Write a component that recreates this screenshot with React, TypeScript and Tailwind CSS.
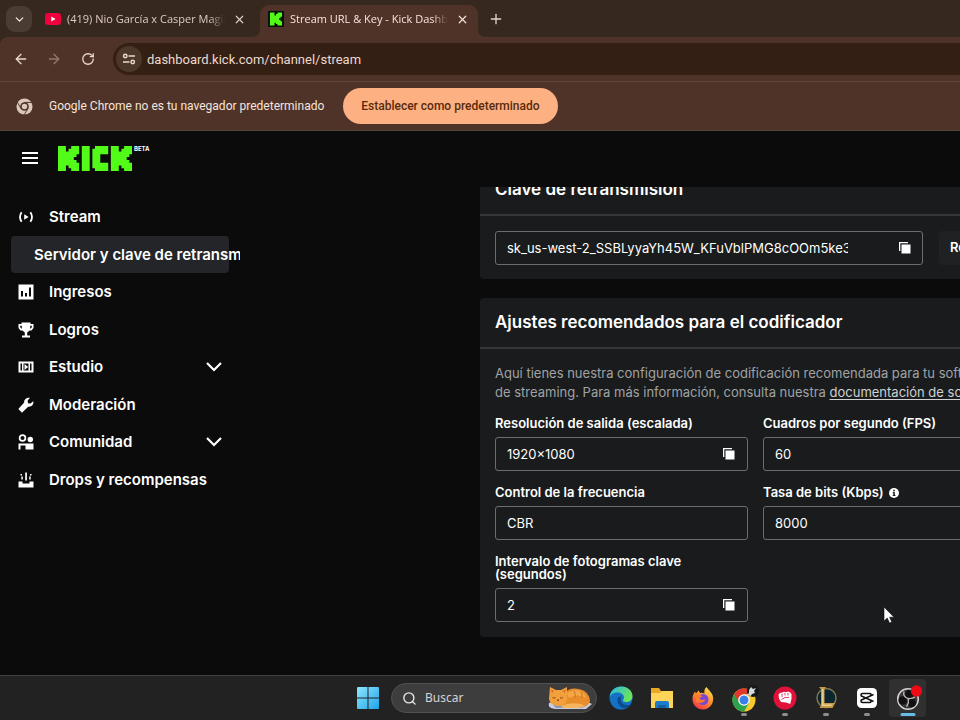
import type { ReactNode } from "react";
import { ArrowLeft, ArrowRight, ChevronDown, Plus, RotateCw, Search, X } from "lucide-react";

const K_PATH = "M0 0h3v2h1V1h1V0h3v3H7v1H6v1h1v1h1v3H5V8H4V7H3v2H0Z";

function YouTubeIcon() {
  return (
    <svg width="16" height="12" viewBox="0 0 16 12" aria-hidden="true">
      <rect width="16" height="12" rx="3" fill="#f0003c" />
      <path d="M6.3 3.5v5l4.3-2.5Z" fill="#fff" />
    </svg>
  );
}

function KickFavicon() {
  return (
    <svg width="16" height="16" viewBox="0 0 16 16" aria-hidden="true">
      <rect width="16" height="16" fill="#07120a" />
      <path d={K_PATH} transform="translate(2 1.5) scale(1.5 1.45)" fill="#53fc18" />
    </svg>
  );
}

function ChromeMark() {
  return (
    <svg width="17" height="17" viewBox="0 0 18 18" className="shrink-0" aria-hidden="true">
      <circle cx="9" cy="9" r="8.5" fill="#dcc6ba" />
      <circle cx="9" cy="9" r="4.600" fill="#4f3329" />
      <circle cx="9" cy="9" r="2.900" fill="#dcc6ba" />
      <path d="M9 4.700h8.500M5.300 11.200 1 3.800M12.700 11.200 8.500 18" fill="none" stroke="#4f3329" strokeWidth="1" />
    </svg>
  );
}

function KickLogo() {
  return (
    <svg width="74" height="25" viewBox="0 0 28 9" preserveAspectRatio="none" fill="#53fc18" role="img" aria-label="Kick">
      <path d={K_PATH} />
      <rect x="9" y="0" width="3" height="9" />
      <path d="M14 0h5v3h-3v3h3v3h-5V8h-1V1h1Z" />
      <path d={K_PATH} transform="translate(20 0)" />
    </svg>
  );
}

function CopyIcon() {
  return (
    <svg width="14" height="14" viewBox="0 0 14 14" fill="#fff" aria-hidden="true">
      <path d="M1 1h9v1.3H2.3V10H1Z" />
      <rect x="3.5" y="3.5" width="9" height="9" />
    </svg>
  );
}

function InfoIcon() {
  return (
    <svg width="10" height="10" viewBox="0 0 10 10" aria-hidden="true">
      <circle cx="5" cy="5" r="5" fill="#fff" />
      <path d="M4.2 1.8h1.6v1.5H4.2ZM3.8 4h2v3h.6v1H3.7V7h.6V5h-.5Z" fill="#191b1c" />
    </svg>
  );
}

const navIcons: Record<string, ReactNode> = {
  stream: (
    <>
      <path d="M6.2 5.2v5.6L10.6 8Z" />
      <path d="M3.6 3.2Q.4 8 3.6 12.8M12.4 3.2Q15.6 8 12.4 12.8" fill="none" stroke="#fff" strokeWidth="1.8" />
    </>
  ),
  revenue: <path fillRule="evenodd" d="M.5.5h15v15H.5ZM3 7v5.500h2V7ZM7 9v3.500h2V9ZM11 3.500v9h2v-9Z" />,
  trophy: (
    <path
      fillRule="evenodd"
      d="M3.500.5h9V2h3v4L13.500 8.500h-1.800L9.200 10.500v3H12v2H4v-2h2.800v-3L4.300 8.500H2.500L.5 6V2h3ZM2.200 3.700v1.600l1 1.200h.6V3.700ZM12.200 3.700v2.800h.6l1-1.200V3.700Z"
    />
  ),
  studio: <path fillRule="evenodd" d="M.5 2.500h15v11H.5ZM2.500 4.500v7h1.500v-7ZM5.500 4.500v7h5v-7ZM12 4.500v7h1.500v-7ZM6.500 5 10.200 8l-3.700 3Z" />,
  wrench: <path d="M15.200 4.200 12.500 6.500 10 6.200 9.700 3.600 12 .8C8.800 0 5.700 2.500 6.200 5.600L.3 12l3.700 3.700 6.200-6c3.500.7 6-2.400 5-5.500Z" />,
  community: (
    <>
      <circle cx="4.500" cy="4" r="2.900" fill="none" stroke="#fff" strokeWidth="1.700" />
      <circle cx="12.300" cy="5.500" r="2.700" />
      <path d="M.5 15.500V9.500H15.500v6H7.500v-4h-5v4Z" />
    </>
  ),
  drops: (
    <>
      <path d="M.5 9.500h4v2h7v-2h4v6H.5Z" />
      <path d="M7.200.5h1.700v8H7.200ZM2.500 2h1.500v1.500H2.500ZM3.300 4.500h1.500v3H3.300ZM12 2h1.500v1.500H12ZM11.200 4.500h1.500v3h-1.500Z" />
    </>
  ),
};

const navItems = [
  { label: "Stream", icon: "stream" },
  { label: "Servidor y clave de retransmisión", active: true },
  { label: "Ingresos", icon: "revenue" },
  { label: "Logros", icon: "trophy" },
  { label: "Estudio", icon: "studio", expandable: true },
  { label: "Moderación", icon: "wrench" },
  { label: "Comunidad", icon: "community", expandable: true },
  { label: "Drops y recompensas", icon: "drops" },
];

function Tab({ title, icon, active }: { title: string; icon: ReactNode; active?: boolean }) {
  return (
    <div
      className={
        "relative flex h-8 w-[218px] items-center rounded-t-[9px] pb-1 pl-2 " +
        (active ? "bg-[#4f3329] text-[#f6e4db]" : "text-[#dccbc1]")
      }
    >
      {active && (
        <>
          <svg className="absolute bottom-0 -left-2" width="8" height="8" viewBox="0 0 8 8" aria-hidden="true">
            <path d="M8 0v8H0Q8 8 8 0Z" fill="#4f3329" />
          </svg>
          <svg className="absolute -right-2 bottom-0" width="8" height="8" viewBox="0 0 8 8" aria-hidden="true">
            <path d="M0 0v8h8Q0 8 0 0Z" fill="#4f3329" />
          </svg>
        </>
      )}
      {icon}
      <span className="ml-1.5 w-[158px] overflow-hidden font-['Open_Sans',sans-serif] text-[11px] whitespace-nowrap [mask-image:linear-gradient(to_right,#000_90%,transparent)]">
        {title}
      </span>
      <button aria-label="Cerrar pestaña" className="ml-2">
        <X size={13} strokeWidth={2.2} />
      </button>
    </div>
  );
}

function Browser() {
  return (
    <header className="shrink-0 bg-[#37281f] font-[Roboto,'Noto_Sans',sans-serif]">
      <div className="flex h-[37px] items-end">
        <button aria-label="Buscar pestañas" className="mb-[5px] ml-1.5 flex size-[26px] items-center justify-center rounded-[9px] bg-[#4a3b33] text-[#f3e2d8]">
          <ChevronDown size={13} strokeWidth={2.5} />
        </button>
        <div className="ml-[5px] flex gap-[5px]">
          <Tab title="(419) Nio García x Casper Magico" icon={<YouTubeIcon />} />
          <Tab title="Stream URL & Key - Kick Dashboard" icon={<KickFavicon />} active />
        </div>
        <button aria-label="Nueva pestaña" className="mb-2.5 ml-2.5 text-[#e4d3c9]">
          <Plus size={16} />
        </button>
      </div>
      <div className="flex h-11 items-center rounded-tl-lg bg-[#4f3329] pl-[13px] text-[#ecd9ce]">
        <button aria-label="Atrás">
          <ArrowLeft size={16} />
        </button>
        <button aria-label="Adelante" className="ml-[17px] text-[#93776b]">
          <ArrowRight size={16} />
        </button>
        <button aria-label="Volver a cargar" className="ml-[19px]">
          <RotateCw size={14} strokeWidth={2.200} />
        </button>
        <div className="ml-[18px] flex h-8 grow items-center rounded-l-full bg-[#331f13] pl-[3px]">
          <button aria-label="Información del sitio" className="flex size-[26px] shrink-0 items-center justify-center rounded-full bg-[#4d372b]">
            <svg width="14" height="14" viewBox="0 0 14 14" fill="none" stroke="#ecd9ce" strokeWidth="1.500" aria-hidden="true">
              <circle cx="3.300" cy="4" r="1.700" />
              <path d="M6.500 4H13M1 10h6.500" />
              <circle cx="10.700" cy="10" r="1.700" />
            </svg>
          </button>
          <input aria-label="Dirección" readOnly defaultValue="dashboard.kick.com/channel/stream" className="ml-[5px] h-8 grow bg-transparent text-[13px] text-[#ecd9ce] outline-none" />
        </div>
      </div>
      <div className="flex h-[50px] items-center border-y border-t-[#62463b] border-b-[#57443b] bg-[#4f3329] pl-4 text-[12px] text-[#f6e4db]">
        <ChromeMark />
        <span className="ml-4 whitespace-nowrap">Google Chrome no es tu navegador predeterminado</span>
        <button className="ml-[19px] h-9 rounded-full bg-[#fdb183] px-[18px] font-medium whitespace-nowrap text-[#592b0b]">Establecer como predeterminado</button>
      </div>
    </header>
  );
}

function Sidebar() {
  return (
    <nav className="w-60 shrink-0 overflow-hidden pt-[11px] pl-[11px]">
      <ul className="grid h-[300px] grid-rows-8">
        {navItems.map((item) => (
          <li key={item.label} className="w-[218px]">
            <a
              href="#"
              className={
                "flex h-full items-center pt-px text-[15px] font-semibold whitespace-nowrap " +
                (item.active ? "rounded bg-[#232528] pl-[23px]" : "pl-[7px]")
              }
            >
              {item.icon && (
                <svg width="16" height="16" viewBox="0 0 16 16" fill="#fff" className="mr-[15px] shrink-0" aria-hidden="true">
                  {navIcons[item.icon]}
                </svg>
              )}
              {item.label}
              {item.expandable && (
                <svg width="16" height="10" viewBox="0 0 16 10" className="mr-[7px] ml-auto" fill="none" stroke="#fff" strokeWidth="2.200" aria-hidden="true">
                  <path d="m1 1 7 7 7-7" />
                </svg>
              )}
            </a>
          </li>
        ))}
      </ul>
    </nav>
  );
}

function Panel({ title, children }: { title: string; children: ReactNode }) {
  return (
    <section className="min-w-[551px] rounded bg-[#191b1c]">
      <h2 className="flex h-[51px] items-center border-b-2 border-[#343637] px-[15px] pt-px text-[17px] font-semibold">{title}</h2>
      {children}
    </section>
  );
}

type FieldProps = { id: string; label: string; value: string; copy?: boolean; info?: boolean };

function Field({ id, label, value, copy, info }: FieldProps) {
  return (
    <div className="flex flex-col gap-[7px]">
      <label htmlFor={id} className="flex items-center gap-[5px] text-[13px] leading-[13px] font-semibold">
        {label}
        {info && <InfoIcon />}
      </label>
      <div className="flex h-[34px] items-center rounded-[3px] border border-[#6b6d6e] px-[11px]">
        <input id={id} readOnly defaultValue={value} className="w-0 grow bg-transparent pt-0.5 text-[13px] outline-none" />
        {copy && (
          <button aria-label={"Copiar " + label}>
            <CopyIcon />
          </button>
        )}
      </div>
    </div>
  );
}

function Dashboard() {
  return (
    <div className="flex min-h-0 grow flex-col overflow-hidden bg-[#0b0b0b] font-[Inter,sans-serif] text-white">
      <div className="flex h-14 shrink-0 items-center pb-0.5 pl-[22px]">
        <button aria-label="Menú" className="flex w-4 flex-col gap-[3px]">
          <span className="h-0.5 bg-white" />
          <span className="h-0.5 bg-white" />
          <span className="h-0.5 bg-white" />
        </button>
        <a href="#" className="ml-5 flex items-start">
          <KickLogo />
          <span className="ml-0.5 text-[6px] leading-[6px] font-bold">BETA</span>
        </a>
      </div>
      <div className="flex min-h-0 grow">
        <Sidebar />
        <main className="min-w-0 grow overflow-hidden pl-60">
          <div className="-mt-[22px] flex flex-col gap-[19px]">
            <Panel title="Clave de retransmisión">
              <div className="flex gap-4 px-[15px] pt-[15px] pb-3.5">
                <div className="flex h-[34px] grow items-center justify-between rounded-[3px] border border-[#6b6d6e] pr-2.5 pl-[11px]">
                  <input aria-label="Clave de retransmisión" readOnly defaultValue="sk_us-west-2_SSBLyyaYh45W_KFuVblPMG8cOOm5ke3x" className="w-[341px] bg-transparent pt-0.5 text-[13px] outline-none" />
                  <button aria-label="Copiar clave">
                    <CopyIcon />
                  </button>
                </div>
                <button className="w-[77px] shrink-0 rounded-[3px] bg-[#1f2122] pl-[11px] text-left text-[13px] font-semibold">Renovar</button>
              </div>
            </Panel>
            <Panel title="Ajustes recomendados para el codificador">
              <div className="p-[15px]">
                <p className="pr-4 text-[13px] leading-[19px] text-[#a0a3a5]">
                  Aquí tienes nuestra configuración de codificación recomendada para tu software de streaming. Para más información, consulta nuestra{" "}
                  <a href="#" className="text-[#cfd1d2] underline underline-offset-2">documentación de soporte</a>
                </p>
                <div className="mt-[15px] grid grid-cols-2 gap-[15px]">
                  <Field id="resolution" label="Resolución de salida (escalada)" value="1920×1080" copy />
                  <Field id="fps" label="Cuadros por segundo (FPS)" value="60" copy />
                  <Field id="rate" label="Control de la frecuencia" value="CBR" />
                  <Field id="bitrate" label="Tasa de bits (Kbps)" value="8000" copy info />
                  <Field id="keyframe" label="Intervalo de fotogramas clave (segundos)" value="2" copy />
                </div>
              </div>
            </Panel>
          </div>
        </main>
      </div>
    </div>
  );
}

function WindowsIcon() {
  return (
    <svg width="22" height="22" viewBox="0 0 22 22" aria-hidden="true">
      <defs>
        <linearGradient id="win" x1="0" y1="0" x2="1" y2="1">
          <stop offset="0" stopColor="#8fe6fd" />
          <stop offset="1" stopColor="#1fa4ea" />
        </linearGradient>
      </defs>
      <path d="M0 1q0-1 1-1h9.500v10.500H0ZM11.500 0H21q1 0 1 1v9.500H11.500ZM0 11.500h10.500V22H1q-1 0-1-1ZM11.500 11.500H22V21q0 1-1 1h-9.500Z" fill="url(#win)" />
    </svg>
  );
}

function CatPicture() {
  return (
    <svg width="46" height="25" viewBox="0 0 46 25" aria-hidden="true">
      <path d="M2 17 9 15h30l6 3-6 5H8Q0 22 2 17Z" fill="#c9cde0" />
      <path d="M6 19h34l-5 3H9Z" fill="#8f96b8" />
      <path d="M17 8Q22 1 32 3q10 2 11 12-1 5-7 6H14Z" fill="#e88d2c" />
      <path d="M20 7q6-4 13-2 5 2 6 7-8-5-17 0Z" fill="#f4a747" />
      <path d="M3 1 9 4h5l6-3v12q-1 7-9 7-8-1-9-7Z" fill="#f2a03c" />
      <path d="M27 5q2 4 1 7M34 6q2 3 1 6" fill="none" stroke="#d47c22" strokeWidth="1.200" />
      <path d="M14 20q8-4 20-2l4 2-6 2H16Z" fill="#f6b35a" />
      <path d="M5.500 11.500q1.500 1.500 3 0M13 11.500q1.500 1.500 3 0M10 14h2l-1 1Z" fill="none" stroke="#8a4512" />
      <path d="m4 3 3 2-2 2ZM18.800 3l-3 2 2 2Z" fill="#d4742a" />
    </svg>
  );
}

function EdgeIcon() {
  return (
    <svg width="24" height="24" viewBox="0 0 24 24" aria-hidden="true">
      <defs>
        <linearGradient id="edgeTop" x1="0" y1="0" x2="1" y2=".4">
          <stop offset="0" stopColor="#2ab7e8" />
          <stop offset="1" stopColor="#6be35a" />
        </linearGradient>
      </defs>
      <circle cx="12" cy="12" r="11.500" fill="#1571c4" />
      <path d="M.6 11C1.500 4.500 6.500.5 12.300.5 19 .5 23.500 5 23.500 10c0 4-3 6-6.200 6-2.500 0-3.600-1-3.300-2 .8-1 1-1.700 1-2.500C15 8.500 12 6.500 8.500 6.500 5 6.500 1.600 8.500.6 11Z" fill="url(#edgeTop)" />
      <path d="M8.600 12.500c-1 4.500 2 9 7 9.500 2.700 0 5-1.500 6.500-3.800-5.500 2.500-10.500-.6-10.300-5 0-1 .4-1.700.8-2.200-1.800-.6-3.500 0-4 1.500Z" fill="#0c4a8c" />
    </svg>
  );
}

function FolderIcon() {
  return (
    <svg width="24" height="22" viewBox="0 0 24 22" aria-hidden="true">
      <path d="M1 1h8l2 3h12v17H1Z" fill="#e8a724" />
      <path d="M1 6h9l2-2h11v17H1Z" fill="#fcd45a" />
      <path d="M5 21v-5q0-2 2-2h10q2 0 2 2v5Z" fill="#1b7ccb" />
      <path d="M8 18h8v3H8Z" fill="#155f9f" />
    </svg>
  );
}

function FirefoxIcon() {
  return (
    <svg width="22" height="23" viewBox="0 0 22 23" aria-hidden="true">
      <defs>
        <linearGradient id="fox" x1=".8" y1="0" x2=".2" y2="1">
          <stop offset="0" stopColor="#ffe34a" />
          <stop offset=".5" stopColor="#ff8a2a" />
          <stop offset="1" stopColor="#f2304f" />
        </linearGradient>
      </defs>
      <path d="M14.500 0c1 2 3 3 4 5 3 3 3.500 8 1.500 12-2 3.500-5 5.500-9 5.500C5 22.500.5 18 .5 12c0-3 1-6 2.500-7.500L4 6.500 6.500 3.500 8 6c2-.5 3.500 0 4.500.5C12 4 12.500 1.500 14.500 0Z" fill="url(#fox)" />
      <circle cx="11" cy="12.500" r="5.500" fill="#7b45d6" />
      <path d="M4 8c3-1 5 .2 7 1.500-2 .2-3 1-3.500 2.500 2 1.500 4 1 6 .5-1 3-5 4.500-8 3-2-1.500-2.500-5-1.500-7.500Z" fill="#ff7b2e" />
    </svg>
  );
}

function ChromeIcon() {
  return (
    <svg width="30" height="28" viewBox="0 0 30 28" aria-hidden="true">
      <circle cx="15" cy="16" r="11.500" fill="#f7c92d" />
      <path d="M15 16 5 10.200A11.500 11.500 0 0 0 15 27.500l5-8.500Z" fill="#2ba24c" />
      <path d="M5 10.200A11.500 11.500 0 0 1 25 10.200H15L9.500 17Z" fill="#e2392d" />
      <circle cx="15" cy="16" r="5.800" fill="#fff" />
      <circle cx="15" cy="16" r="4.500" fill="#3b7fe8" />
      <circle cx="24" cy="7" r="6" fill="#15181a" />
      <path d="m22 3 2 2 3-1-2 3 1 2-3 1-2 3-1-2-3 1 3-3v-3Z" fill="#d6dadb" />
    </svg>
  );
}

function FistIcon() {
  return (
    <svg width="24" height="24" viewBox="0 0 24 24" aria-hidden="true">
      <circle cx="12" cy="12" r="11.500" fill="#df1239" />
      <path d="M5.500 8.500 7 7l2-.5 2-.8 2 .5 2-.7 2 .8L18.500 8v5l-1.300 5-4.200-1.500L8 16l-2-3.500Z" fill="#fff" />
      <path d="M9 7.500v3.500M12 7v2.500M15 7v2.500M8.500 13.500 12 11.500h4" fill="none" stroke="#df1239" strokeWidth=".8" />
    </svg>
  );
}

function LeagueIcon() {
  return (
    <svg width="24" height="24" viewBox="0 0 24 24" aria-hidden="true">
      <circle cx="12.500" cy="12" r="9.500" fill="#0c2630" stroke="#7f7851" strokeWidth="1.500" />
      <path d="M5 1h7l-1.500 2v14H21l-2.500 5H5.500L7 19.500V3.500Z" fill="#c79a4b" />
      <path d="M8 3h1.500v15.500H18l-.7 1.500H8Z" fill="#ecd08a" />
    </svg>
  );
}

function CapCutIcon() {
  return (
    <svg width="20" height="20" viewBox="0 0 20 20" aria-hidden="true">
      <rect width="20" height="20" rx="4.500" fill="#fff" />
      <path d="M14 7.500V6.500Q14 5.500 13 5.500H5.500Q4 5.500 4 7t1.500 1.500M14 12.500v1q0 1-1 1H5.500Q4 14.500 4 13t1.500-1.500M5 8.200 16.500 13.500M5 11.800 16.500 6.500" fill="none" stroke="#111" strokeWidth="1.600" />
    </svg>
  );
}

function ObsIcon() {
  return (
    <svg width="28" height="26" viewBox="0 0 28 26" aria-hidden="true">
      <circle cx="14" cy="14" r="10.300" fill="#3a383a" stroke="#d5d2d0" strokeWidth="1.500" />
      <circle cx="15.500" cy="9" r="4.300" fill="#111012" />
      <circle cx="8.800" cy="15.500" r="4.300" fill="#111012" />
      <circle cx="17.800" cy="18" r="4.300" fill="#111012" />
      <path d="M10 6.500q-1.500 5 4 7M14 13.500q1.500 4-1.500 8M14 13.500q4 .5 7-1.500" fill="none" stroke="#bcb8b6" strokeWidth="1.300" />
      <circle cx="22.500" cy="6" r="5.700" fill="#f00814" />
    </svg>
  );
}

const apps = [
  { name: "Microsoft Edge", icon: <EdgeIcon /> },
  { name: "Explorador de archivos", icon: <FolderIcon /> },
  { name: "Firefox", icon: <FirefoxIcon /> },
  { name: "Google Chrome", icon: <ChromeIcon />, running: true },
  { name: "Puño", icon: <FistIcon />, running: true },
  { name: "League of Legends", icon: <LeagueIcon />, running: true },
  { name: "CapCut", icon: <CapCutIcon />, running: true },
  { name: "OBS Studio", icon: <ObsIcon />, running: true, active: true },
];

function Taskbar() {
  return (
    <footer className="flex h-[45px] shrink-0 items-center border-t border-[#3e3e3e] bg-[#222222] pl-[347px]">
      <button aria-label="Inicio" className="flex w-[41px] shrink-0 justify-center">
        <WindowsIcon />
      </button>
      <label className="mx-[3px] flex h-[30px] w-[206px] shrink-0 items-center rounded-full border border-[#505050] bg-[#3d3d3d] pr-[3px] pl-2.5">
        <Search size={15} strokeWidth={2.200} className="shrink-0 text-[#e6e6e6]" />
        <input aria-label="Buscar" placeholder="Buscar" className="ml-2 w-0 grow bg-transparent font-['Noto_Sans',sans-serif] text-[12px] outline-none placeholder:text-[#d4d4d4]" />
        <CatPicture />
      </label>
      {apps.map((app) => (
        <button key={app.name} aria-label={app.name} className="relative flex h-full w-[41px] shrink-0 items-center justify-center">
          <span className={"flex h-[38px] w-[37px] items-center justify-center rounded " + (app.active ? "bg-[#303030]" : "")}>{app.icon}</span>
          {app.running && (
            <span
              className={
                "absolute bottom-1 left-1/2 h-[3px] -translate-x-1/2 rounded-full " +
                (app.active ? "w-[15px] bg-[#66bce4]" : "w-1.5 bg-[#8e8e8e]")
              }
            />
          )}
        </button>
      ))}
    </footer>
  );
}

export default function App() {
  return (
    <div className="relative flex h-screen flex-col overflow-hidden bg-[#0b0b0b]">
      <Browser />
      <Dashboard />
      <Taskbar />
      <svg className="absolute top-[606px] left-[883px]" width="12" height="18" viewBox="0 0 12 18" aria-hidden="true">
        <path d="M1 1v14l3.300-3 2.200 5 2.300-1-2.200-4.800H11Z" fill="#fff" stroke="#111" strokeWidth=".6" />
      </svg>
    </div>
  );
}
